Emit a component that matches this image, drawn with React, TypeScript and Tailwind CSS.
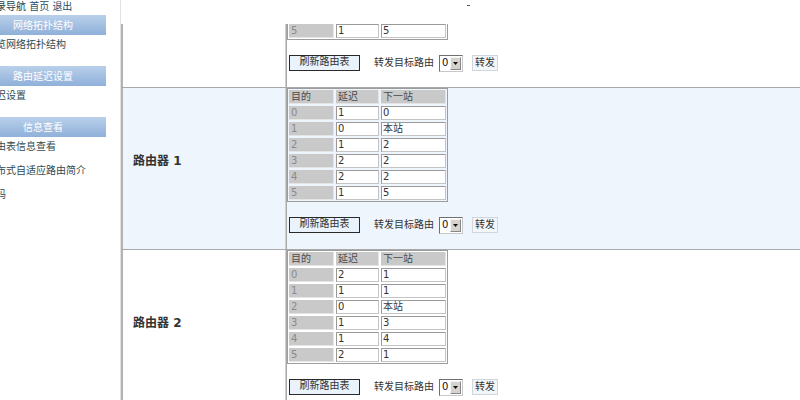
import React from "react";

type Row = [string, string, string];

const routers: { name: string; rows: Row[] }[] = [
  {
    name: "路由器 0",
    rows: [
      ["0", "0", "本站"],
      ["1", "1", "1"],
      ["2", "2", "1"],
      ["3", "3", "1"],
      ["4", "3", "1"],
      ["5", "1", "5"],
    ],
  },
  {
    name: "路由器 1",
    rows: [
      ["0", "1", "0"],
      ["1", "0", "本站"],
      ["2", "1", "2"],
      ["3", "2", "2"],
      ["4", "2", "2"],
      ["5", "1", "5"],
    ],
  },
  {
    name: "路由器 2",
    rows: [
      ["0", "2", "1"],
      ["1", "1", "1"],
      ["2", "0", "本站"],
      ["3", "1", "3"],
      ["4", "1", "4"],
      ["5", "2", "1"],
    ],
  },
];

function GrayCell({ children, dark }: { children: React.ReactNode; dark?: boolean }) {
  return (
    <div
      className={
        "h-[14px] bg-[#c9c9c9] border-r border-b border-[#e4e4e4] pl-[2px] leading-[14px] " +
        (dark ? "text-[#4a4a4a]" : "text-[#8a8a8a]")
      }
    >
      {children}
    </div>
  );
}

function WhiteCell({ children }: { children: React.ReactNode }) {
  return (
    <div className="h-[14px] bg-white border border-[#c4c4c4] border-t-[#9a9a9a] border-l-[#9a9a9a] pl-[1px] leading-[12px] text-[#333]">
      {children}
    </div>
  );
}

function RouteTable({ rows }: { rows: Row[] }) {
  return (
    <div className="grid w-fit grid-cols-[45px_43px_65px] gap-[2px] border border-[#9c9c9c] p-[1px] text-[10px]">
      <GrayCell dark>目的</GrayCell>
      <GrayCell dark>延迟</GrayCell>
      <GrayCell dark>下一站</GrayCell>
      {rows.map((r) => (
        <React.Fragment key={r[0]}>
          <GrayCell>{r[0]}</GrayCell>
          <WhiteCell>{r[1]}</WhiteCell>
          <WhiteCell>{r[2]}</WhiteCell>
        </React.Fragment>
      ))}
    </div>
  );
}

function Controls() {
  return (
    <div className="mt-[15px] flex h-[16px] items-center pl-[2px] text-[10px] text-[#333]">
      <div className="flex h-[16px] w-[71px] items-center justify-center border-[1.5px] border-[#2a2a2a] bg-[#eaf3fb] pb-[2px] leading-none">
        刷新路由表
      </div>
      <span className="ml-[14px] leading-none">转发目标路由</span>
      <div className="ml-[5px] flex h-[17px] w-[24px] items-center border border-[#6f6f6f] border-r-[#c8c8c8] border-b-[#c8c8c8] bg-white">
        <span className="pl-[2px] leading-none text-[#111]">0</span>
        <div className="ml-auto mr-[1px] flex h-[13px] w-[11px] items-center justify-center bg-[#d6d3ce] border border-[#f4f4f4] border-r-[#888] border-b-[#888]">
          <svg width="5" height="3" viewBox="0 0 5 3">
            <path d="M0 0 H5 L2.5 3 Z" fill="#111" />
          </svg>
        </div>
      </div>
      <div className="ml-[9px] flex h-[16px] w-[26px] items-center justify-center border border-[#cfd6dd] bg-[#f3f6f9] pb-[1px] leading-none">
        转发
      </div>
    </div>
  );
}

function RouterRow({ name, rows, shaded, first }: { name: string; rows: Row[]; shaded?: boolean; first?: boolean }) {
  return (
    <div
      className={
        "grid h-[162px] shrink-0 grid-cols-[165px_1fr] border-t border-[#a9a9a9] " +
        (shaded ? "bg-[#eef5fc] " : "bg-white ") +
        (first ? "mt-[-99px]" : "")
      }
    >
      <div className="flex items-center border-l-2 border-r border-l-[#b3b3b3] border-r-[#d0d0d0] pb-[16px] pl-[10px]">
        <span className="text-[12px] font-bold text-[#333]">{name}</span>
      </div>
      <div className="border-l border-[#a9a9a9]">
        <RouteTable rows={rows} />
        <Controls />
      </div>
    </div>
  );
}

function Bar({ children }: { children: React.ReactNode }) {
  return (
    <div className="flex h-[20px] w-[120px] items-center justify-center bg-gradient-to-b from-[#b9d0ea] to-[#8fb0d9] pr-[6px] text-[10px] text-white">
      {children}
    </div>
  );
}

function Item({ children }: { children: React.ReactNode }) {
  return <div className="h-[20px] leading-[20px] whitespace-nowrap text-[10px] text-[#2f4a50]">{children}</div>;
}

export default function App() {
  return (
    <div className="flex h-[400px] w-[800px] overflow-hidden bg-white font-['DejaVu_Sans','Noto_Sans_CJK_SC',sans-serif]">
      <aside className="h-full w-[121px] shrink-0 overflow-hidden border-r border-[#e2e2e2] bg-white">
        <div className="ml-[-14px]">
          <div className="h-[14px] whitespace-nowrap text-[10px] leading-[13px] text-[#2a3f44]">
            目录导航 <span className="text-[#1f4e6b]">首页</span> <span className="text-[#1f4e6b]">退出</span>
          </div>
          <div className="mt-[1px]">
            <Bar>网络拓扑结构</Bar>
            <Item>浏览网络拓扑结构</Item>
          </div>
          <div className="mt-[11px]">
            <Bar>路由延迟设置</Bar>
            <Item>延迟设置</Item>
          </div>
          <div className="mt-[11px]">
            <Bar>信息查看</Bar>
            <div className="flex flex-col gap-[4px]">
              <Item>路由表信息查看</Item>
              <Item>分布式自适应路由简介</Item>
              <Item>密码</Item>
            </div>
          </div>
        </div>
      </aside>
      <main className="flex h-full min-w-0 flex-1 flex-col">
        <div className="h-[24px] shrink-0 pl-[346px] pt-[5px]">
          <div className="h-[1px] w-[3px] bg-[#555]" />
        </div>
        <div className="flex min-h-0 flex-1 flex-col overflow-hidden">
          {routers.map((r, i) => (
            <RouterRow key={r.name} name={r.name} rows={r.rows} shaded={i === 1} first={i === 0} />
          ))}
        </div>
      </main>
    </div>
  );
}
